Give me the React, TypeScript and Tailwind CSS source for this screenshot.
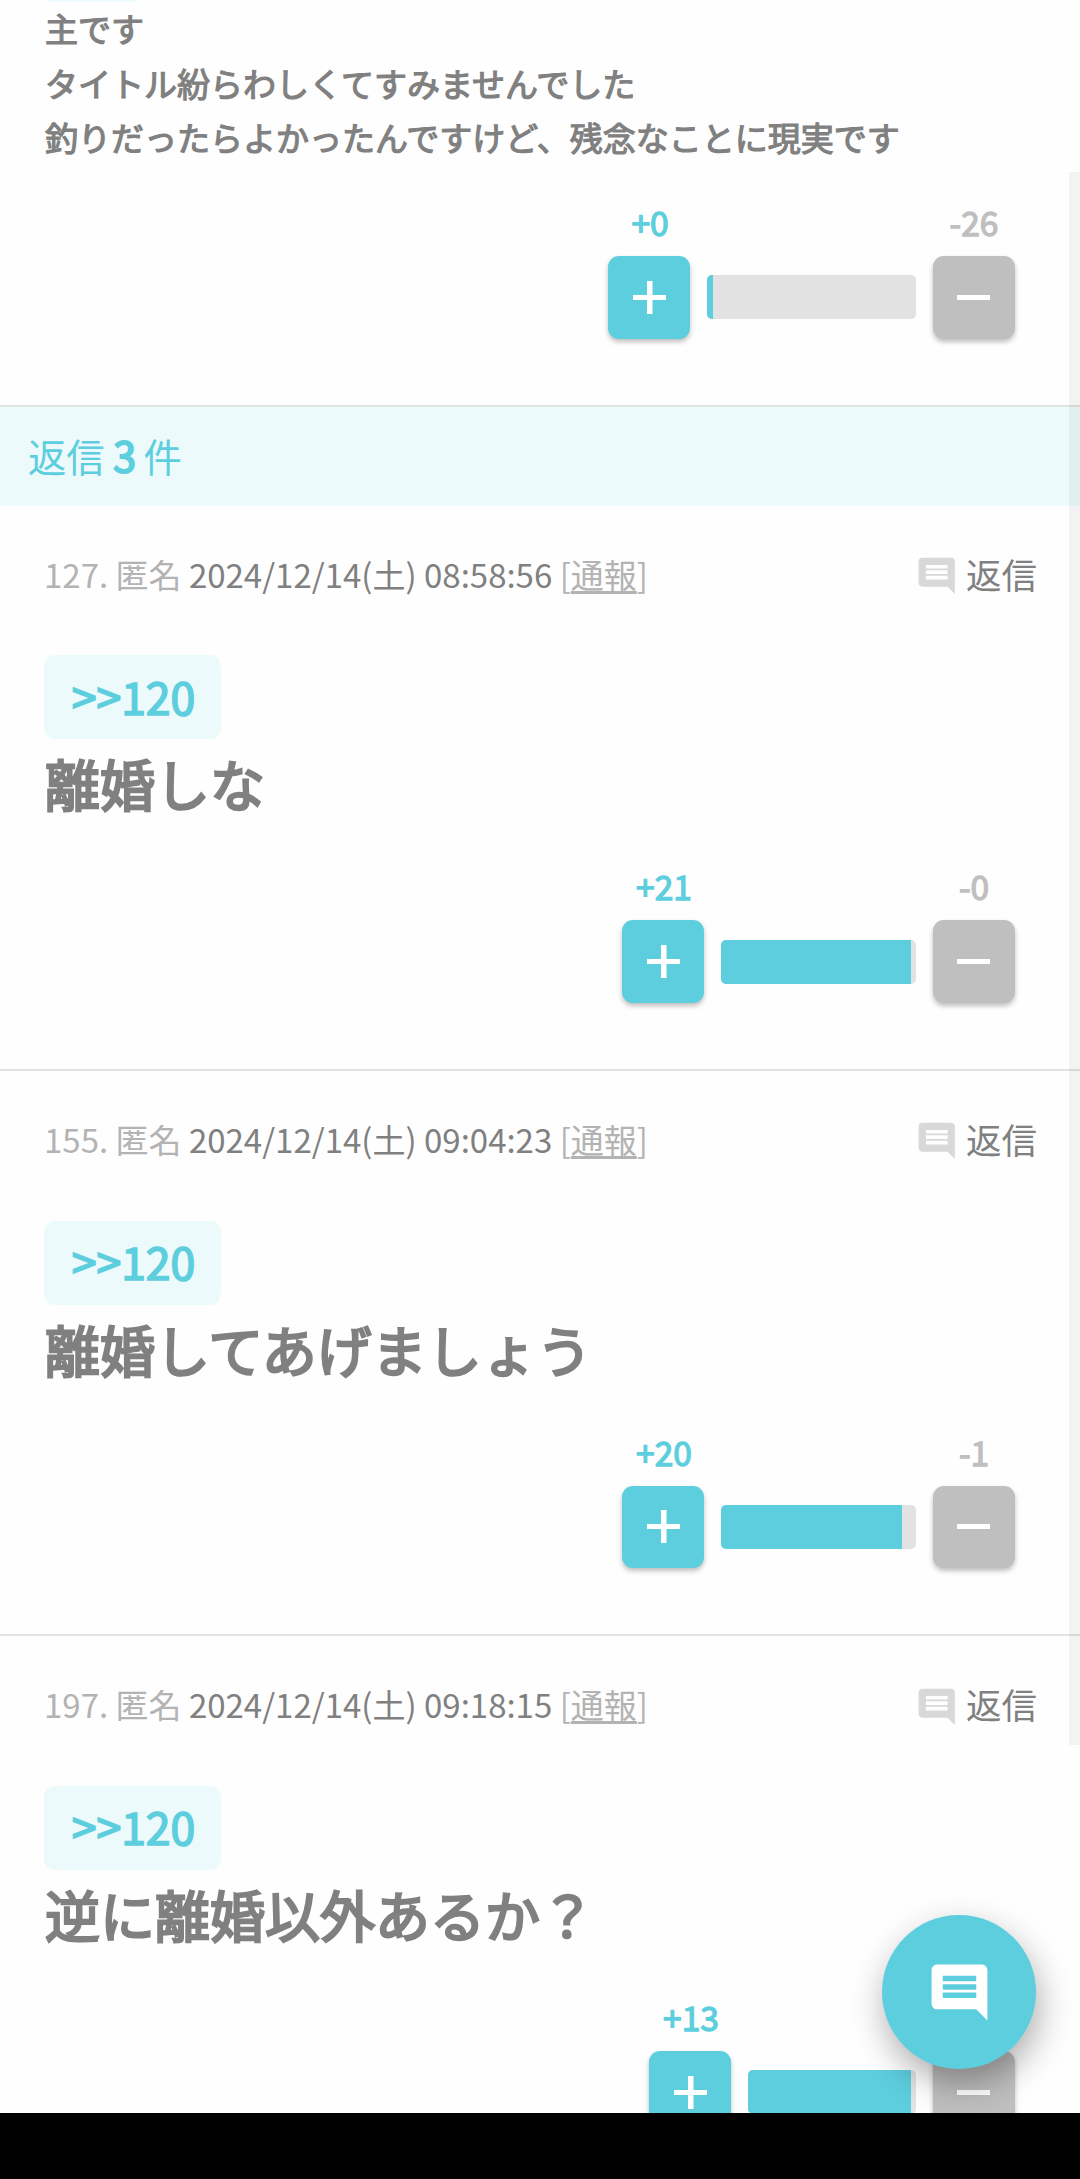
import { MdComment } from "react-icons/md";

type VoteProps = {
  plus: number;
  minus: number;
  barClass: string;
  percent: number;
};

type Reply = {
  id: number;
  time: string;
  text: string;
  vote: VoteProps;
};

const replies: Reply[] = [
  { id: 127, time: "08:58:56", text: "離婚しな", vote: { plus: 21, minus: 0, barClass: "w-[195px]", percent: 97.5 } },
  { id: 155, time: "09:04:23", text: "離婚してあげましょう", vote: { plus: 20, minus: 1, barClass: "w-[195px]", percent: 92.8 } },
  { id: 197, time: "09:18:15", text: "逆に離婚以外あるか？", vote: { plus: 13, minus: 0, barClass: "w-[168px]", percent: 97.1 } },
];

const PlusIcon = () => (
  <svg className="size-[33px]" viewBox="0 0 33 33" fill="currentColor">
    <path d="M14 0h5.5v14H33v5H19.5v14H14V19H0v-5h14z" />
  </svg>
);

const MinusIcon = () => (
  <svg className="size-[33px]" viewBox="0 0 33 33" fill="currentColor">
    <path d="M0 14h33v5H0z" />
  </svg>
);

const Vote = ({ plus, minus, barClass, percent }: VoteProps) => {
  return (
    <div className="mt-auto flex items-end justify-end gap-[17px] pr-[65px] pb-[66px]">
      <div className="flex w-[82px] flex-col items-center gap-[14px]">
        <span className="pl-0.5 text-[33.5px] leading-10 whitespace-nowrap text-[#5dcede] [-webkit-text-stroke:1.3px]">+{plus}</span>
        <button className="flex h-[82.7px] w-full items-center justify-center rounded-[11px] bg-[#5dcede] text-white shadow-[0_3px_5px_rgba(0,0,0,0.25)]">
          <PlusIcon />
        </button>
      </div>
      <div className={`mb-[19.6px] h-11 overflow-hidden rounded-[5px] bg-[#e2e2e2] ${barClass}`}>
        <div className="h-full bg-[#5dcede]" style={{ width: `${percent}%` }} />
      </div>
      <div className="flex w-[82px] flex-col items-center gap-[14px]">
        <span className="text-[33.5px] leading-10 whitespace-nowrap text-[#bfbfbf] [-webkit-text-stroke:1.3px]">-{minus}</span>
        <button className="flex h-[82.7px] w-full items-center justify-center rounded-[11px] bg-[#bfbfbf] pr-px text-white shadow-[0_3px_5px_rgba(0,0,0,0.25)]">
          <MinusIcon />
        </button>
      </div>
    </div>
  );
};

const ReplyItem = ({ id, time, text, vote }: Reply) => {
  return (
    <article className="flex h-[565.15px] shrink-0 flex-col border-b-2 border-[#e2e2e2]">
      <header className="mt-12 flex h-11 items-center justify-between pr-[43px] pl-11 text-[33px] leading-[44px]">
        <p className="-mt-1 whitespace-nowrap text-[#b3b3b3]">
          {id}. 匿名 <span className="text-[#808080]">2024/12/14(土) {time}</span>{" "}
          [<a className="underline decoration-[3px] underline-offset-[3px]">通報</a>]
        </p>
        <button className="flex items-center gap-[7px] text-[35.5px] leading-[44px] whitespace-nowrap text-[#808080]">
          <MdComment className="size-[43.5px] text-[#d8d8d8]" />
          <span className="-mt-1">返信</span>
        </button>
      </header>
      <a className="mt-[57.4px] ml-11 flex h-[84px] w-[177px] items-center justify-center rounded-[11px] bg-[#edfafc] pb-0.5 pl-0.5 text-[44.5px] leading-none text-[#5dcede] [-webkit-text-stroke:1.7px]">
        &gt;&gt;120
      </a>
      <p className="mt-[3px] ml-[45px] text-[55px] leading-[80px] text-[#808080] [-webkit-text-stroke:2.4px]">{text}</p>
      <Vote {...vote} />
    </article>
  );
};

const App = () => {
  return (
    <div className="h-[2179px] w-[1080px] bg-black font-['Noto_Sans_CJK_JP',sans-serif]">
      <main className="relative flex h-[2113px] flex-col overflow-hidden bg-[#fefefe]">
        <section className="flex h-[407px] shrink-0 flex-col border-b-2 border-[#e2e2e2]">
          <div className="ml-[47px] h-0.5 w-[89px] rounded-b-[4px] bg-[#edfafc]" />
          <p className="-mt-px ml-[45px] text-[33px] leading-[54.7px] whitespace-nowrap text-[#808080] [-webkit-text-stroke:1.2px]">
            主です
            <br />
            タイトル紛らわしくてすみませんでした
            <br />
            釣りだったらよかったんですけど、残念なことに現実です
          </p>
          <Vote plus={0} minus={26} barClass="w-[209px]" percent={2.8} />
        </section>

        <h2 className="flex h-[99px] shrink-0 items-center bg-[#edfafc] pb-0.5 pl-7 text-[38.3px] text-[#5dcede]">
          <span className="whitespace-pre">
            返信 <span className="text-[41px] leading-none tracking-[-1px] [-webkit-text-stroke:2px]">3</span> 件
          </span>
        </h2>

        {replies.map((reply) => (
          <ReplyItem key={reply.id} {...reply} />
        ))}

        {/* scrollbar thumb */}
        <div className="absolute top-[172px] right-0 h-[1573px] w-[11px] bg-black/[0.045]" />

        <button className="absolute top-[1915px] right-11 flex size-[154px] items-center justify-center rounded-full bg-[#5dcede] text-white shadow-[3px_14px_34px_rgba(0,0,0,0.32)]">
          <MdComment className="size-[67px]" />
        </button>
      </main>
    </div>
  );
};

export default App;
